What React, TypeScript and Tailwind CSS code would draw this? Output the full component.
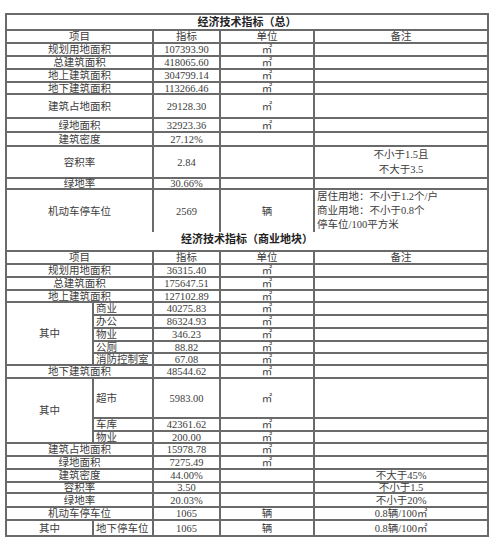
import React from "react";

const B = "border-2 border-[#6a6a6a] p-0 align-middle leading-[9px]";
const C = B + " text-center";
const L = B + " text-left pl-[2px]";

function Row({ h, children }: { h: number; children: React.ReactNode }) {
  return <tr style={{ height: h }}>{children}</tr>;
}

export default function App() {
  const sq = "㎡";
  return (
    <div className="bg-white w-[497px] h-[545px] pt-[13px] pl-[5px]">
      <table
        className="border-collapse table-fixed w-[482px] text-[10.5px] text-[#3c3c3c]"
        style={{ fontFamily: '"Liberation Serif", "Noto Sans CJK SC", serif' }}
      >
        <colgroup>
          <col style={{ width: 87 }} />
          <col style={{ width: 60 }} />
          <col style={{ width: 67 }} />
          <col style={{ width: 94 }} />
          <col style={{ width: 174 }} />
        </colgroup>
        <tbody>
          <Row h={16}>
            <td colSpan={5} className={C + " font-bold text-[11px] text-[#222]"}>经济技术指标（总）</td>
          </Row>
          <Row h={13}>
            <td colSpan={2} className={C}>项目</td>
            <td className={C}>指标</td>
            <td className={C}>单位</td>
            <td className={C}>备注</td>
          </Row>
          {[
            ["规划用地面积", "107393.90", 13],
            ["总建筑面积", "418065.60", 13],
            ["地上建筑面积", "304799.14", 13],
            ["地下建筑面积", "113266.46", 12],
            ["建筑占地面积", "29128.30", 24],
            ["绿地面积", "32923.36", 14],
          ].map(([a, b, h]) => (
            <Row h={h as number} key={a as string}>
              <td colSpan={2} className={C}>{a}</td>
              <td className={C}>{b}</td>
              <td className={C}>{sq}</td>
              <td className={C}></td>
            </Row>
          ))}
          <Row h={14}>
            <td colSpan={2} className={C}>建筑密度</td>
            <td className={C}>27.12%</td>
            <td className={C}></td>
            <td className={C}></td>
          </Row>
          <Row h={30}>
            <td colSpan={2} className={C}>容积率</td>
            <td className={C}>2.84</td>
            <td className={C}></td>
            <td className={C + " leading-[15px]"}>
              不小于1.5且
              <br />
              不大于3.5
            </td>
          </Row>
          <Row h={11}>
            <td colSpan={2} className={C}>绿地率</td>
            <td className={C}>30.66%</td>
            <td className={C}></td>
            <td className={C}></td>
          </Row>
          <Row h={42}>
            <td colSpan={2} className={C + " border-b-0"}>机动车停车位</td>
            <td className={C + " border-b-0"}>2569</td>
            <td className={C + " border-b-0"}>辆</td>
            <td className={L + " border-b-0 align-top leading-[14px]"}>
              居住用地：不小于1.2个/户
              <br />
              商业用地：不小于0.8个
              <br />
              停车位/100平方米
            </td>
          </Row>
          <Row h={19}>
            <td colSpan={5} className={C + " border-t-0 font-bold text-[11px] text-[#222] align-bottom pb-[3px]"}>
              经济技术指标（商业地块）
            </td>
          </Row>
          <Row h={13}>
            <td colSpan={2} className={C}>项目</td>
            <td className={C}>指标</td>
            <td className={C}>单位</td>
            <td className={C}>备注</td>
          </Row>
          {[
            ["规划用地面积", "36315.40", 13],
            ["总建筑面积", "175647.51", 13],
            ["地上建筑面积", "127102.89", 12],
          ].map(([a, b, h]) => (
            <Row h={h as number} key={"t2" + a}>
              <td colSpan={2} className={C}>{a}</td>
              <td className={C}>{b}</td>
              <td className={C}>{sq}</td>
              <td className={C}></td>
            </Row>
          ))}
          {[
            ["商业", "40275.83", 13],
            ["办公", "86324.93", 13],
            ["物业", "346.23", 13],
            ["公厕", "88.82", 12],
            ["消防控制室", "67.08", 12],
          ].map(([a, b, h], i) => (
            <Row h={h as number} key={"s" + a}>
              {i === 0 && (
                <td rowSpan={5} className={C}>其中</td>
              )}
              <td className={L}>{a}</td>
              <td className={C}>{b}</td>
              <td className={C}>{sq}</td>
              <td className={C}></td>
            </Row>
          ))}
          <Row h={13}>
            <td colSpan={2} className={C}>地下建筑面积</td>
            <td className={C}>48544.62</td>
            <td className={C}>{sq}</td>
            <td className={C}></td>
          </Row>
          {[
            ["超市", "5983.00", 40],
            ["车库", "42361.62", 13],
            ["物业", "200.00", 12],
          ].map(([a, b, h], i) => (
            <Row h={h as number} key={"u" + a}>
              {i === 0 && (
                <td rowSpan={3} className={C}>其中</td>
              )}
              <td className={L}>{a}</td>
              <td className={C}>{b}</td>
              <td className={C}>{sq}</td>
              <td className={C}></td>
            </Row>
          ))}
          <Row h={13}>
            <td colSpan={2} className={C}>建筑占地面积</td>
            <td className={C}>15978.78</td>
            <td className={C}>{sq}</td>
            <td className={C}></td>
          </Row>
          <Row h={13}>
            <td colSpan={2} className={C}>绿地面积</td>
            <td className={C}>7275.49</td>
            <td className={C}>{sq}</td>
            <td className={C}></td>
          </Row>
          <Row h={13}>
            <td colSpan={2} className={C}>建筑密度</td>
            <td className={C}>44.00%</td>
            <td className={C}></td>
            <td className={C}>不大于45%</td>
          </Row>
          <Row h={11}>
            <td colSpan={2} className={C}>容积率</td>
            <td className={C}>3.50</td>
            <td className={C}></td>
            <td className={C}>不小于1.5</td>
          </Row>
          <Row h={14}>
            <td colSpan={2} className={C}>绿地率</td>
            <td className={C}>20.03%</td>
            <td className={C}></td>
            <td className={C}>不小于20%</td>
          </Row>
          <Row h={13}>
            <td colSpan={2} className={C}>机动车停车位</td>
            <td className={C}>1065</td>
            <td className={C}>辆</td>
            <td className={C}>0.8辆/100{sq}</td>
          </Row>
          <Row h={16}>
            <td className={C}>其中</td>
            <td className={L}>地下停车位</td>
            <td className={C}>1065</td>
            <td className={C}>辆</td>
            <td className={C}>0.8辆/100{sq}</td>
          </Row>
        </tbody>
      </table>
    </div>
  );
}
